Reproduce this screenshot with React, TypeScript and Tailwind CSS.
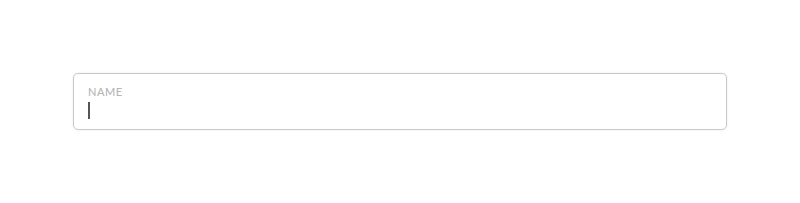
export default function App() {
  return (
    <div className="flex h-[203px] w-[800px] items-center justify-center bg-white" style={{ fontFamily: "Lato, 'Noto Sans', sans-serif" }}>
      <div className="flex h-[57px] w-[654px] flex-col rounded-[5px] border border-[#c9c9c9] bg-white px-[14px] pt-[12px] shadow-[0_0_3px_rgba(0,0,0,0.08)]">
        <label className="text-[11px] leading-[12px] font-medium tracking-[0.05em] text-[#b5b5b5]">NAME</label>
        <div className="mt-[2px] flex h-[20px] items-center">
          <span className="block h-[17px] w-[2px] bg-[#555]" />
        </div>
      </div>
    </div>
  );
}
